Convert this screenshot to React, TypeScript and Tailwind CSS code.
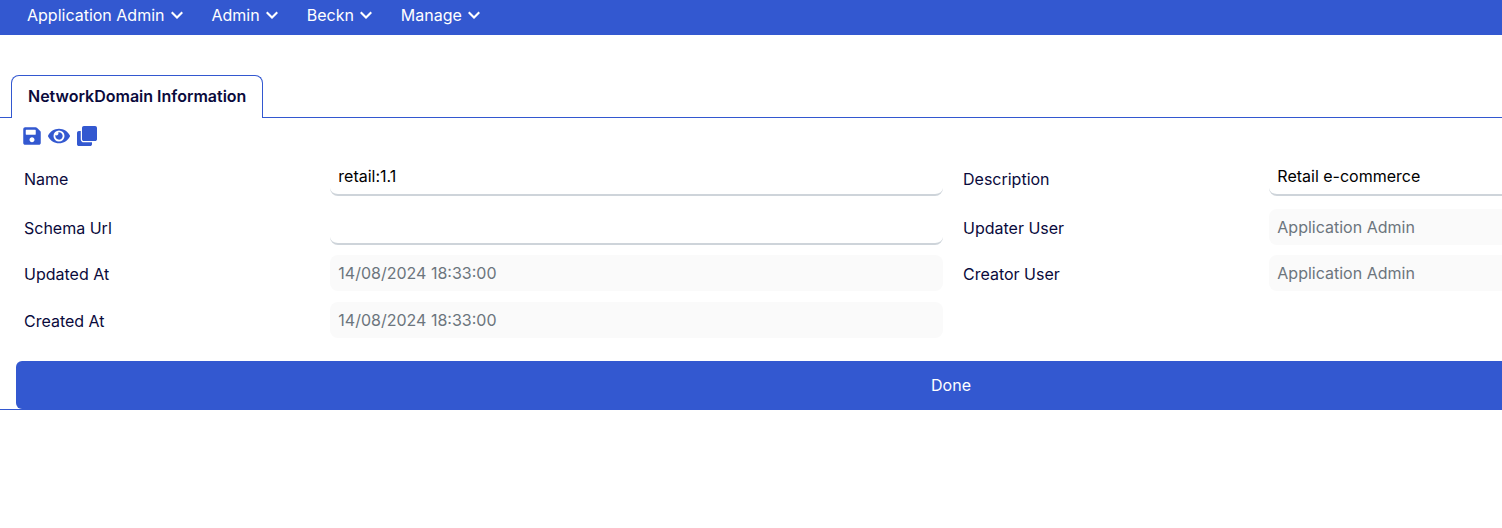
import React, { useId } from "react";
import { FaClone, FaEye, FaSave } from "react-icons/fa";

const menus = ["Application Admin", "Admin", "Beckn", "Manage"];

type FieldProps = { label: string; value: string; disabled?: boolean };

const fields: FieldProps[] = [
  { label: "Name", value: "retail:1.1" },
  { label: "Description", value: "Retail e-commerce" },
  { label: "Schema Url", value: "" },
  { label: "Updater User", value: "Application Admin", disabled: true },
  { label: "Updated At", value: "14/08/2024 18:33:00", disabled: true },
  { label: "Creator User", value: "Application Admin", disabled: true },
  { label: "Created At", value: "14/08/2024 18:33:00", disabled: true },
];

function Chevron() {
  return (
    <svg viewBox="6 8 12 8" className="h-2 w-3" fill="currentColor" aria-hidden="true">
      <path d="M16.5 8.4 12 12.9 7.5 8.4 6 9.9l6 6 6-6z" />
    </svg>
  );
}

function Field({ label, value, disabled }: FieldProps) {
  const id = useId();
  return (
    <div className="grid grid-cols-[1fr_2fr] items-end">
      <label htmlFor={id} className="pb-[5px] leading-6">
        {label}
      </label>
      <input
        id={id}
        type="text"
        defaultValue={value}
        disabled={disabled}
        className={
          disabled
            ? "h-9 w-full min-w-0 rounded-lg bg-[#fafafa] px-2 text-[#6c757d]"
            : "h-[38px] w-full min-w-0 rounded-lg border-b-2 border-[#ced4da] bg-white px-2 text-black outline-none"
        }
      />
    </div>
  );
}

export default function App() {
  return (
    <div className="min-h-screen overflow-x-hidden bg-white font-['Inter',sans-serif] text-base text-[#0a0a3c]">
      <nav className="flex h-[35px] items-start gap-[29px] bg-[#3358d0] px-[27px] pt-[3px] text-white">
        {menus.map((m) => (
          <button key={m} type="button" className="flex items-center gap-[6px] leading-6">
            {m}
            <Chevron />
          </button>
        ))}
      </nav>

      <main className="w-[calc(100%+400px)] border-b border-[#3358d0] pt-10">
        <div role="tablist" className="flex items-end">
          <span className="w-[11px] border-b border-[#3358d0]" />
          <button
            type="button"
            role="tab"
            aria-selected="true"
            className="h-[43px] rounded-t-lg border border-b-0 border-[#3358d0] px-4 pb-[2px] font-semibold leading-6"
          >
            NetworkDomain Information
          </button>
          <span className="flex-1 border-b border-[#3358d0]" />
        </div>

        <form onSubmit={(e) => e.preventDefault()}>
          <div className="flex h-10 items-start gap-[7px] pl-[23px] pt-2 text-[#3358d0]">
            <button type="button" aria-label="Save">
              <FaSave className="h-5 w-[18px]" />
            </button>
            <button type="button" aria-label="View">
              <FaEye className="h-5 w-[22px]" />
            </button>
            <button type="button" aria-label="Duplicate">
              <FaClone className="size-5" />
            </button>
          </div>

          <div className="grid grid-cols-2 grid-rows-[38px_39px_36px_37px] gap-x-5 gap-y-[10px] pl-6 pr-5">
            {fields.map((f) => (
              <Field key={f.label} {...f} />
            ))}
          </div>

          <div className="px-4 pt-[23px]">
            <button type="submit" className="block h-12 w-full rounded-md bg-[#3358d0] text-white">
              Done
            </button>
          </div>
        </form>
      </main>
    </div>
  );
}
